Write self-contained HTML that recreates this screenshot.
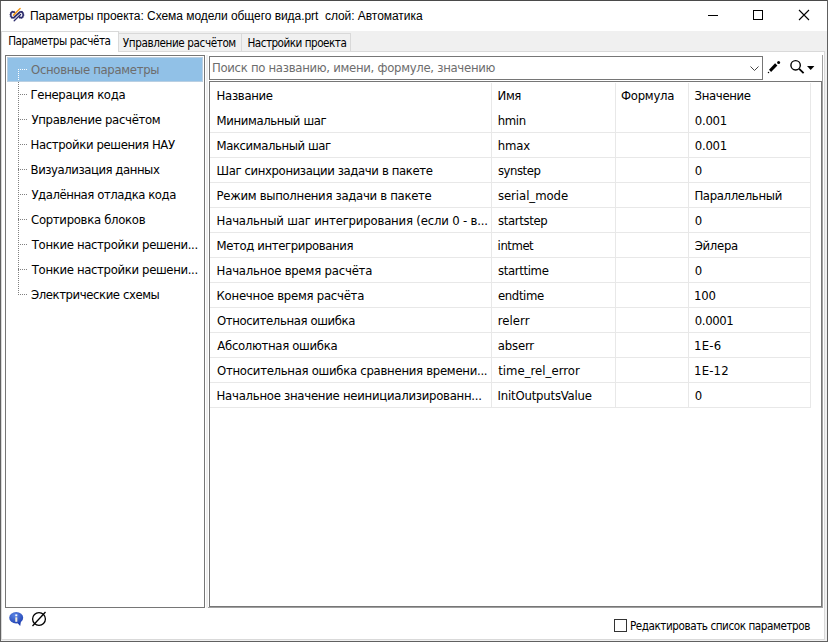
<!DOCTYPE html>
<html lang="ru">
<head>
<meta charset="utf-8">
<title>Параметры проекта</title>
<style>
html,body{margin:0;padding:0;}
body{width:828px;height:642px;position:relative;overflow:hidden;background:#fff;
 font-family:"DejaVu Sans Condensed","DejaVu Sans","Liberation Sans",sans-serif;color:#000;}
.abs{position:absolute;}
.t{position:absolute;white-space:nowrap;line-height:16px;height:16px;}
.ttl{font:12px/16px "Liberation Sans",sans-serif;}
.tb{font-size:11.6px;line-height:14px;height:14px;}
.ti{font-size:13px;}
.ph{font-size:13px;color:#6d6d6d;}
.c{font-size:13px;}
.cbl{font-size:11.6px;line-height:14px;height:14px;}
/* window frame */
#frameL{left:0;top:0;width:1px;height:642px;background:#606060;}
#frameT{left:0;top:0;width:828px;height:1px;background:#4a4a4a;}
#frameR{left:827px;top:0;width:1px;height:642px;background:#606060;}
#frameB{left:0;top:641px;width:828px;height:1px;background:#606060;}
/* tab strip */
#strip{left:1px;top:31px;width:826px;height:21px;background:#f0f0f0;}
#stripLine{left:1px;top:51px;width:824px;height:1px;background:#d9d9d9;}
.tab{position:absolute;box-sizing:border-box;border:1px solid #d9d9d9;border-bottom:none;background:#f0f0f0;}
#tab1b{left:1px;top:31px;width:118px;height:21px;background:#fff;}
#tab2b{left:118px;top:33px;width:124px;height:18px;border-left:none;}
#tab3b{left:242px;top:33px;width:109px;height:18px;border-left:none;}
/* panel borders */
#panR{left:824px;top:51px;width:1px;height:589px;background:#d9d9d9;}
#panR2{left:825px;top:31px;width:2px;height:610px;background:#f0f0f0;}
#panB{left:1px;top:639px;width:824px;height:1px;background:#d9d9d9;}
#panB2{left:1px;top:640px;width:826px;height:1px;background:#f0f0f0;}
#panL{left:1px;top:52px;width:1px;height:588px;background:#d9d9d9;}
/* tree */
#tree{left:5px;top:55px;width:200px;height:553px;box-sizing:border-box;border:1px solid #767676;background:#fff;}
#split{left:206px;top:55px;width:2px;height:553px;background:#efefef;}
#sel{left:7px;top:57px;width:196px;height:25px;box-sizing:border-box;border:1px solid #b9cfe2;background:#91c1e7;}
/* search */
#combo{left:209px;top:56px;width:554px;height:24px;box-sizing:border-box;border:1px solid #767676;background:#fff;}
/* table */
#tblT{left:209px;top:81px;width:614px;height:1px;background:#767676;}
#tblL{left:209px;top:81px;width:1px;height:526px;background:#767676;}
#tblR{left:822px;top:55px;width:1px;height:553px;background:#a0a0a0;}
#tblR1{left:821px;top:81px;width:1px;height:526px;background:#767676;}
#tblB{left:208px;top:607px;width:615px;height:1px;background:#a0a0a0;}
#tblB1{left:209px;top:606px;width:613px;height:1px;background:#767676;}
.hl{position:absolute;left:210px;width:601px;height:1px;background:#e8e8e8;}
.vl{position:absolute;top:83px;width:1px;height:325px;background:#e8e8e8;}
#cb{left:614px;top:619px;width:13px;height:13px;box-sizing:border-box;border:1px solid #333;background:#fff;}
</style>
</head>
<body>
<div class="abs" id="strip"></div>
<div class="abs" id="panR2"></div>
<div class="abs" id="panB2"></div>
<div class="abs" id="stripLine"></div>
<div class="abs" id="panR"></div>
<div class="abs" id="panB"></div>
<div class="abs" id="panL"></div>

<!-- title bar icon + window buttons -->
<svg class="abs" style="left:4px;top:4px" width="30" height="23" viewBox="4 4 30 23">
 <g fill="none" stroke="#2b2a6b">
  <path d="M14.4 12.5 A2.3 3.0 0 1 0 14.05 17.4 L19.85 12.2 A2.3 3.0 0 1 1 19.5 17.1" stroke-width="2.5" stroke-dasharray="0.9 0.8" opacity="0.55"/>
  <path d="M14.4 12.5 A2.3 3.0 0 1 0 14.05 17.4 L19.85 12.2 A2.3 3.0 0 1 1 19.5 17.1" stroke-width="1.6" stroke-linecap="round"/>
  <path d="M14.2 20.7 L20.6 14.5" stroke-width="1.3" stroke-linecap="round"/>
 </g>
 <path d="M13.5 15.1 L20.1 8.5" stroke="#f39a1e" stroke-width="1.5" stroke-linecap="round" fill="none"/>
</svg>
<svg class="abs" style="left:700px;top:5px" width="120" height="22" viewBox="0 0 120 22">
 <path d="M8 10.5 H18" stroke="#000" stroke-width="1"/>
 <rect x="53.5" y="5.5" width="9" height="9" fill="none" stroke="#000" stroke-width="1"/>
 <path d="M99 5 L109 15 M109 5 L99 15" stroke="#000" stroke-width="1.1"/>
</svg>

<!-- tabs -->
<div class="tab" id="tab2b"></div>
<div class="tab" id="tab3b"></div>
<div class="tab" id="tab1b"></div>

<!-- tree -->
<div class="abs" id="tree"></div>
<div class="abs" id="split"></div>
<div class="abs" id="sel"></div>
<svg class="abs" style="left:15px;top:57px" width="16" height="250" viewBox="0 0 16 250">
 <g stroke="#808080" stroke-width="1" stroke-dasharray="1 1" fill="none">
  <path d="M3.5 25 V238"/>
  <path d="M3 37.5 H12"/><path d="M3 62.5 H12"/><path d="M3 87.5 H12"/><path d="M3 112.5 H12"/>
  <path d="M3 137.5 H12"/><path d="M3 162.5 H12"/><path d="M3 187.5 H12"/><path d="M3 212.5 H12"/><path d="M3 237.5 H12"/>
 </g>
 <g stroke="#ffffff" stroke-width="1" stroke-dasharray="1 1" fill="none">
  <path d="M3.5 12 V24"/><path d="M3 12.5 H12"/>
 </g>
</svg>

<!-- search -->
<div class="abs" id="combo"></div>
<svg class="abs" style="left:745px;top:58px" width="80" height="20" viewBox="0 0 80 20">
 <path d="M5.5 8.5 L9.5 12.5 L13.5 8.5" fill="none" stroke="#444" stroke-width="1"/>
 <path d="M24.0 11.7 L30.1 5.3 L32.4 7.5 L26.1 13.9 Z" fill="#000"/>
 <circle cx="33.6" cy="4.4" r="1.5" fill="#000"/>
 <circle cx="23.5" cy="14.5" r="0.75" fill="#000"/>
 <circle cx="50.6" cy="7.3" r="4.7" fill="none" stroke="#000" stroke-width="1.4"/>
 <path d="M54.2 10.8 L58.6 15.2" stroke="#000" stroke-width="1.8"/>
 <path d="M62 8 H69.4 L65.7 12 Z" fill="#000"/>
</svg>

<!-- table frame -->
<div class="abs" id="tblT"></div><div class="abs" id="tblR1"></div><div class="abs" id="tblB1"></div>
<div class="abs" id="tblL"></div><div class="abs" id="tblR"></div><div class="abs" id="tblB"></div>
<div class="hl" style="top:132px"></div><div class="hl" style="top:157px"></div>
<div class="hl" style="top:182px"></div><div class="hl" style="top:207px"></div><div class="hl" style="top:232px"></div>
<div class="hl" style="top:257px"></div><div class="hl" style="top:282px"></div><div class="hl" style="top:307px"></div>
<div class="hl" style="top:332px"></div><div class="hl" style="top:357px"></div><div class="hl" style="top:382px"></div>
<div class="hl" style="top:407px"></div>
<div class="vl" style="left:491px"></div><div class="vl" style="left:615px"></div><div class="vl" style="left:688px"></div><div class="vl" style="left:810px"></div>

<div class="t ttl" id="title" style="left:30.00px;top:8px;letter-spacing:-0.046px;">Параметры проекта: Схема модели общего вида.prt&nbsp; слой: Автоматика</div>
<div class="t tb" id="tab1" style="left:8.17px;top:34px;letter-spacing:-0.424px;">Параметры расчёта</div>
<div class="t tb" id="tab2" style="left:122.83px;top:36px;letter-spacing:-0.389px;">Управление расчётом</div>
<div class="t tb" id="tab3" style="left:247.38px;top:36px;letter-spacing:-0.487px;">Настройки проекта</div>
<div class="t ti" id="tr0" style="left:31.06px;top:62px;letter-spacing:-0.329px;color:#6d6d6d;">Основные параметры</div>
<div class="t ti" id="tr1" style="left:30.60px;top:87px;letter-spacing:-0.354px;">Генерация кода</div>
<div class="t ti" id="tr2" style="left:31.40px;top:112px;letter-spacing:-0.318px;">Управление расчётом</div>
<div class="t ti" id="tr3" style="left:30.60px;top:137px;letter-spacing:-0.385px;">Настройки решения НАУ</div>
<div class="t ti" id="tr4" style="left:30.60px;top:162px;letter-spacing:-0.455px;">Визуализация данных</div>
<div class="t ti" id="tr5" style="left:31.40px;top:187px;letter-spacing:-0.448px;">Удалённая отладка кода</div>
<div class="t ti" id="tr6" style="left:31.06px;top:212px;letter-spacing:-0.315px;">Сортировка блоков</div>
<div class="t ti" id="tr7" style="left:31.80px;top:237px;letter-spacing:-0.346px;">Тонкие настройки решени...</div>
<div class="t ti" id="tr8" style="left:31.80px;top:262px;letter-spacing:-0.346px;">Тонкие настройки решени...</div>
<div class="t ti" id="tr9" style="left:30.94px;top:287px;letter-spacing:-0.421px;">Электрические схемы</div>
<div class="t ph" id="ph" style="left:211.90px;top:60px;letter-spacing:-0.294px;">Поиск по названию, имени, формуле, значению</div>
<div class="t c" id="a0" style="left:216.59px;top:88px;letter-spacing:-0.315px;">Название</div>
<div class="t c" id="a1" style="left:216.59px;top:113px;letter-spacing:-0.391px;">Минимальный шаг</div>
<div class="t c" id="a2" style="left:216.59px;top:138px;letter-spacing:-0.431px;">Максимальный шаг</div>
<div class="t c" id="a3" style="left:216.59px;top:163px;letter-spacing:-0.391px;">Шаг синхронизации задачи в пакете</div>
<div class="t c" id="a4" style="left:216.59px;top:188px;letter-spacing:-0.307px;">Режим выполнения задачи в пакете</div>
<div class="t c" id="a5" style="left:216.59px;top:213px;letter-spacing:-0.195px;">Начальный шаг интегрирования (если 0 - в...</div>
<div class="t c" id="a6" style="left:216.59px;top:238px;letter-spacing:-0.396px;">Метод интегрирования</div>
<div class="t c" id="a7" style="left:216.59px;top:263px;letter-spacing:-0.205px;">Начальное время расчёта</div>
<div class="t c" id="a8" style="left:216.59px;top:288px;letter-spacing:-0.257px;">Конечное время расчёта</div>
<div class="t c" id="a9" style="left:217.02px;top:313px;letter-spacing:-0.383px;">Относительная ошибка</div>
<div class="t c" id="a10" style="left:217.34px;top:338px;letter-spacing:-0.322px;">Абсолютная ошибка</div>
<div class="t c" id="a11" style="left:217.02px;top:363px;letter-spacing:-0.289px;">Относительная ошибка сравнения времени...</div>
<div class="t c" id="a12" style="left:216.59px;top:388px;letter-spacing:-0.269px;">Начальное значение неинициализированн...</div>
<div class="t c" id="b0" style="left:497.59px;top:88px;letter-spacing:-0.436px;">Имя</div>
<div class="t c" id="b1" style="left:497.67px;top:113px;letter-spacing:-0.310px;">hmin</div>
<div class="t c" id="b2" style="left:497.67px;top:138px;letter-spacing:-0.144px;">hmax</div>
<div class="t c" id="b3" style="left:497.95px;top:163px;letter-spacing:-0.459px;">synstep</div>
<div class="t c" id="b4" style="left:497.95px;top:188px;letter-spacing:-0.056px;">serial_mode</div>
<div class="t c" id="b5" style="left:497.95px;top:213px;letter-spacing:-0.343px;">startstep</div>
<div class="t c" id="b6" style="left:497.62px;top:238px;letter-spacing:-0.466px;">intmet</div>
<div class="t c" id="b7" style="left:497.95px;top:263px;letter-spacing:-0.345px;">starttime</div>
<div class="t c" id="b8" style="left:498.03px;top:288px;letter-spacing:-0.385px;">endtime</div>
<div class="t c" id="b9" style="left:497.67px;top:313px;letter-spacing:0.052px;">relerr</div>
<div class="t c" id="b10" style="left:497.86px;top:338px;letter-spacing:-0.205px;">abserr</div>
<div class="t c" id="b11" style="left:498.19px;top:363px;letter-spacing:0.019px;">time_rel_error</div>
<div class="t c" id="b12" style="left:497.57px;top:388px;letter-spacing:-0.197px;">InitOutputsValue</div>
<div class="t c" id="f0" style="left:620.99px;top:88px;letter-spacing:-0.266px;">Формула</div>
<div class="t c" id="d0" style="left:694.57px;top:88px;letter-spacing:-0.353px;">Значение</div>
<div class="t c" id="d1" style="left:694.74px;top:113px;letter-spacing:-0.236px;">0.001</div>
<div class="t c" id="d2" style="left:694.74px;top:138px;letter-spacing:-0.236px;">0.001</div>
<div class="t c" id="d3" style="left:694.74px;top:163px;letter-spacing:0.000px;">0</div>
<div class="t c" id="d4" style="left:694.40px;top:188px;letter-spacing:-0.339px;">Параллельный</div>
<div class="t c" id="d5" style="left:694.74px;top:213px;letter-spacing:0.000px;">0</div>
<div class="t c" id="d6" style="left:694.74px;top:238px;letter-spacing:-0.317px;">Эйлера</div>
<div class="t c" id="d7" style="left:694.74px;top:263px;letter-spacing:0.000px;">0</div>
<div class="t c" id="d8" style="left:694.00px;top:288px;letter-spacing:-0.215px;">100</div>
<div class="t c" id="d9" style="left:694.74px;top:313px;letter-spacing:-0.377px;">0.0001</div>
<div class="t c" id="d10" style="left:694.00px;top:338px;letter-spacing:0.265px;">1E-6</div>
<div class="t c" id="d11" style="left:694.00px;top:363px;letter-spacing:0.191px;">1E-12</div>
<div class="t c" id="d12" style="left:694.74px;top:388px;letter-spacing:0.000px;">0</div>
<div class="t cbl" id="cbl" style="left:629.88px;top:619px;letter-spacing:-0.430px;">Редактировать список параметров</div>

<!-- bottom -->
<svg class="abs" style="left:8px;top:610px" width="44" height="20" viewBox="0 0 44 20">
 <defs><radialGradient id="g" cx="0.4" cy="0.3" r="0.8"><stop offset="0" stop-color="#5b86e6"/><stop offset="1" stop-color="#1f3fb0"/></radialGradient></defs>
 <path d="M8.5 12 L12.2 16 L13 11 Z" fill="#1f3fb0"/>
 <ellipse cx="8.2" cy="7.7" rx="7" ry="5.7" fill="url(#g)"/>
 <rect x="7.3" y="4.4" width="2" height="1.9" fill="#fff"/>
 <rect x="7.3" y="7.3" width="2" height="4.5" fill="#f4efdc"/>
 <circle cx="31" cy="9" r="6.4" fill="none" stroke="#000" stroke-width="1.3"/>
 <path d="M24.5 16 L37.5 2" stroke="#000" stroke-width="1.3"/>
</svg>
<div class="abs" id="cb"></div>

<div class="abs" id="frameL"></div><div class="abs" id="frameT"></div><div class="abs" id="frameR"></div><div class="abs" id="frameB"></div>
</body>
</html>
